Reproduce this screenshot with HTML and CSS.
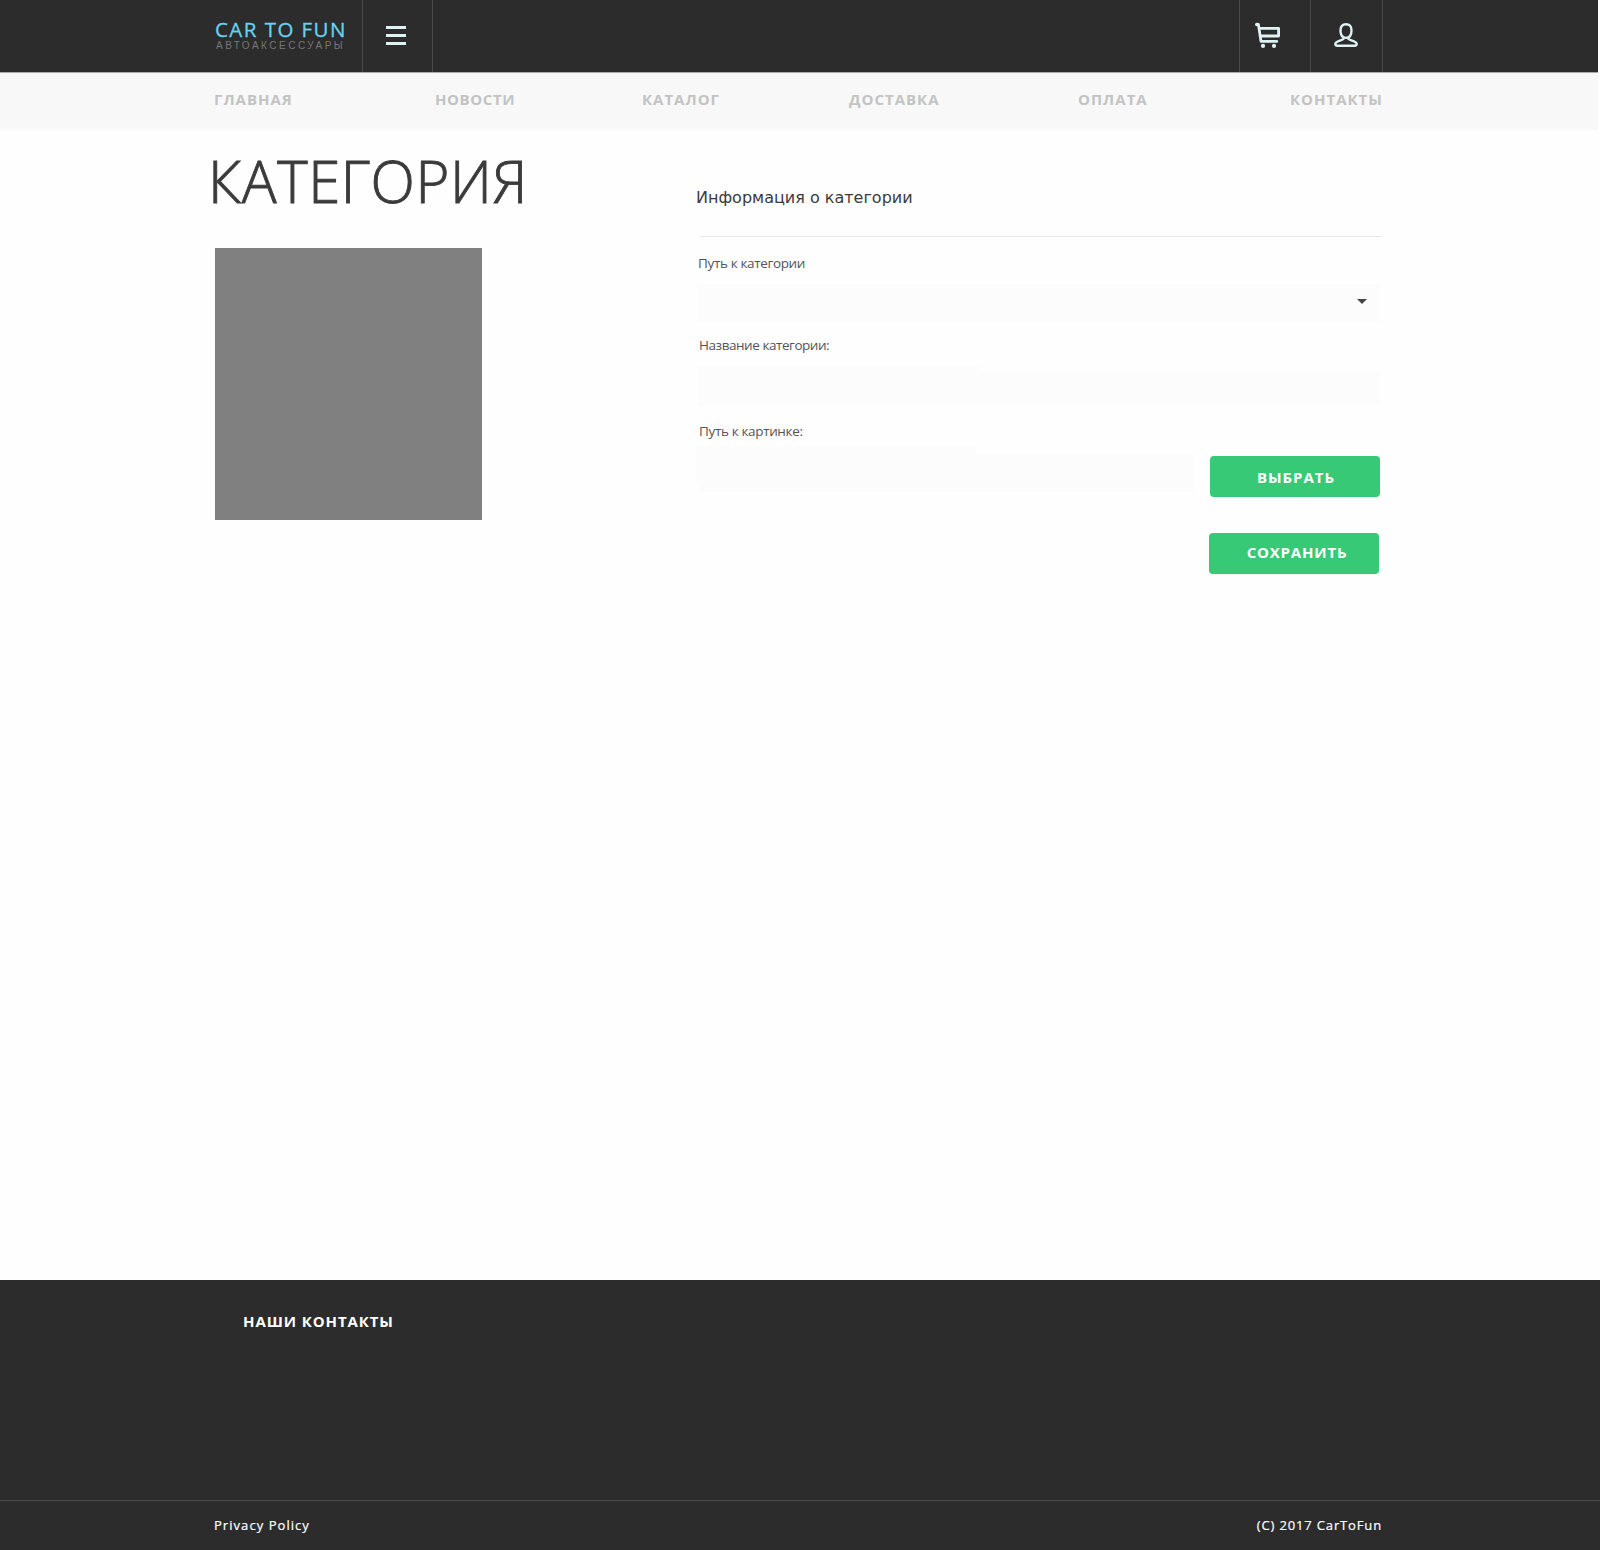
FILE: index.html
```html
<!DOCTYPE html>
<html lang="ru">
<head>
<meta charset="utf-8">
<title>Категория</title>
<link rel="stylesheet" href="styles.css">
</head>
<body>
<header class="topbar">
  <a class="logo"><span class="logo-name">CAR TO FUN</span><span class="logo-sub">АВТОАКСЕССУАРЫ</span></a>
  <button class="cell menu" aria-label="Меню"><svg width="20" height="19" viewBox="0 0 20 19"><path d="M0 0h20v3H0zM0 8h20v3H0zM0 16h20v3H0z" fill="#dff3f5"/></svg></button>
  <div class="spacer"></div>
  <button class="cell cart" aria-label="Корзина"><svg width="26" height="26" viewBox="0 0 26 26" fill="none" stroke="#dff3f5" stroke-width="2.8" stroke-linecap="round" stroke-linejoin="round"><path d="M2 2.4h1.400L6 19.400H21.800M4.400 6.400H23.600V14H5.400"/><path d="M1.800 2.500h.6" stroke-width="3.400"/><circle cx="8" cy="23.900" r="2.100" fill="#dff3f5" stroke="none"/><circle cx="19" cy="23.900" r="2.100" fill="#dff3f5" stroke="none"/></svg></button>
  <button class="cell user" aria-label="Профиль"><svg width="25" height="25" viewBox="0 0 25 25" fill="none" stroke="#dff3f5" stroke-width="2.400" stroke-linejoin="round"><path d="M12 1.300C8.300 1.300 6.500 3.200 6.500 7.600C6.500 12.200 8.500 14.900 12 14.900C15.500 14.900 17.500 12.200 17.500 7.600C17.500 3.200 15.700 1.300 12 1.300Z"/><path d="M10.200 15.200C9 17.600 1.300 17.800 1.300 20.800C1.300 22.200 2 22.700 3.200 22.700H20.800C22 22.700 22.700 22.200 22.700 20.800C22.700 17.800 15 17.600 13.800 15.200"/></svg></button>
</header>
<nav class="nav">
  <a>ГЛАВНАЯ</a><a class="tight">НОВОСТИ</a><a>КАТАЛОГ</a><a>ДОСТАВКА</a><a>ОПЛАТА</a><a>КОНТАКТЫ</a>
</nav>
<main class="content">
  <section class="left">
    <h1>КАТЕГОРИЯ</h1>
    <div class="picture"></div>
  </section>
  <form class="form">
    <h2>Информация о категории</h2>
    <label class="path">Путь к категории</label>
    <div class="field select"><svg width="10" height="5" viewBox="0 0 10 5"><path d="M0 0h10L5 5z" fill="#444"/></svg></div>
    <label class="name">Название категории:</label>
    <div class="field name-field"></div>
    <label class="image">Путь к картинке:</label>
    <div class="file-row"><div class="field file-field"></div><button type="button" class="btn">ВЫБРАТЬ</button></div>
    <button type="button" class="btn save">СОХРАНИТЬ</button>
  </form>
</main>
<footer class="footer">
  <h3>НАШИ КОНТАКТЫ</h3>
  <div class="legal"><span>Privacy Policy</span><span>(C) 2017 CarToFun</span></div>
</footer>
</body>
</html>
```
FILE: styles.css
```css
* { box-sizing: border-box; }
body { margin: 0; min-height: 1550px; display: flex; flex-direction: column; background: #fefefe; color: #3b3b3b; font-family: "Open Sans", "Noto Sans", sans-serif; }
h1, h2, h3 { margin: 0; }
button { border: 0; padding: 0; font: inherit; background: none; }
svg { display: block; }

.topbar { display: flex; width: 1598px; height: 73px; padding: 0 215px; background: #2c2c2c; border-bottom: 1px solid #aaa; }
.logo { width: 147px; padding-top: 16px; display: flex; flex-direction: column; white-space: nowrap; }
.logo-name { font-size: 20.500px; line-height: 27px; letter-spacing: 1.450px; color: #66d3ee; -webkit-text-stroke: 0.300px #66d3ee; }
.logo-sub { font: 10px/12px "Liberation Sans", Arial, sans-serif; margin-top: -3px; padding-left: 1px; letter-spacing: 2.500px; color: #777; }
.cell { height: 72px; border-left: 1px solid #4c4c4c; }
.menu { width: 71px; border-right: 1px solid #4c4c4c; padding: 26px 0 0 23px; display: flex; align-items: flex-start; }
.spacer { flex: 1; }
.cart { width: 71px; padding: 22px 0 0 15px; display: flex; align-items: flex-start; }
.user { width: 73px; border-right: 1px solid #4c4c4c; padding: 23px 0 0 23px; display: flex; align-items: flex-start; }

.nav { display: grid; grid-template-columns: 221px 207px 207px 229px 212px auto; width: 1598px; height: 57px; padding: 14px 0 0 214px; background: #f8f8f8; font-size: 15px; line-height: 24px; font-weight: 700; letter-spacing: 1px; color: #c3c3c3; }
.nav .tight { letter-spacing: 0.600px; }

.content { display: flex; height: 1150px; padding-left: 215px; }
.left { width: 482px; }
h1 { margin-left: -7px; padding-top: 11px; font-size: 58px; line-height: 80px; font-weight: 300; white-space: nowrap; letter-spacing: 0.600px; -webkit-text-stroke: 0.900px #3b3b3b; }
.picture { width: 267px; height: 272px; margin-top: 27px; background: #808080; }
.form { width: 685px; padding-top: 54px; display: flex; flex-direction: column; }
h2 { height: 53px; padding-top: 1px; margin-left: 3px; border-bottom: 1px solid #e8e8e8; font: 16px/26px "DejaVu Sans", sans-serif; text-indent: -4px; }
label { font-size: 13.500px; line-height: 20px; color: #555; margin-left: 2px; letter-spacing: -0.350px; }
.path { margin-top: 16px; margin-left: 1px; }
.field { background: #fcfcfc; }
.select { width: 683px; height: 38px; margin-top: 11px; padding: 15px 13px 0 0; display: flex; justify-content: flex-end; }
.name { margin-top: 13px; letter-spacing: -0.450px; }
.name-field { width: 682px; height: 40px; margin: 11px 0 0 1px; clip-path: polygon(0 0, 282px 0, 282px 4px, 100% 4px, 100% 100%, 0 100%); }
.image { margin-top: 15px; }
.file-row { display: flex; align-items: flex-start; margin-left: -1px; height: 50px; margin-top: 6px; }
.file-field { width: 498px; height: 45px; margin-right: 16px; clip-path: polygon(0 0, 280px 0, 280px 8px, 100% 8px, 100% 100%, 2px 100%, 2px 37px, 0 37px); }
.btn { width: 170px; height: 41px; padding-left: 2px; border-radius: 4px; background: #38c976; color: #fff; font-size: 15px; line-height: 42px; font-weight: 700; letter-spacing: 0.950px; }
.file-row .btn { margin-top: 9px; }
.save { margin: 36px 0 0 512px; padding: 0 0 2px 6px; line-height: 39px; letter-spacing: 0.800px; }

.footer { height: 270px; background: #2c2c2c; color: #fff; }
h3 { height: 220px; padding: 29px 0 0 243px; font-size: 15px; line-height: 24px; font-weight: 700; letter-spacing: 0.900px; }
.legal { display: flex; justify-content: space-between; height: 50px; padding: 12px 218px 0 214px; border-top: 1px solid #4b4b4b; font-size: 13px; line-height: 24px; letter-spacing: 1.050px; -webkit-text-stroke: 0.200px #fff; }
.legal span:last-child { letter-spacing: 0.850px; }
```
